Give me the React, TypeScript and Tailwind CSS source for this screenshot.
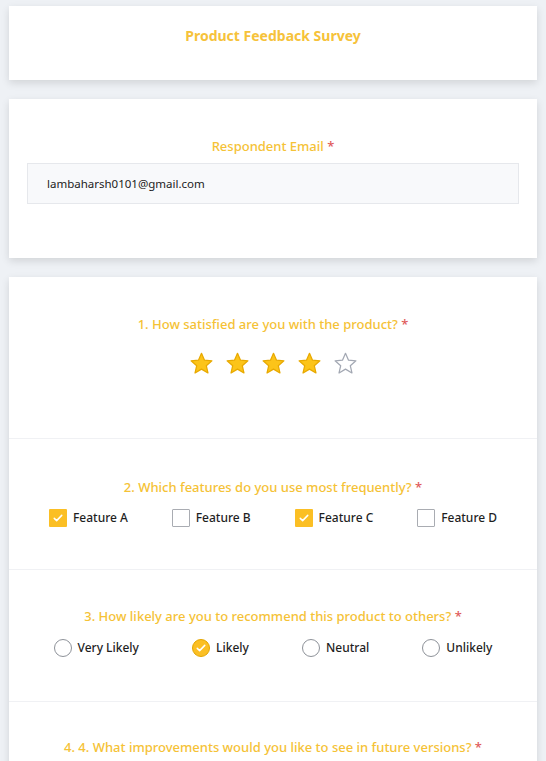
import React from 'react';

const FEATURES = [
  { label: 'Feature A', checked: true },
  { label: 'Feature B', checked: false },
  { label: 'Feature C', checked: true },
  { label: 'Feature D', checked: false },
];

const LIKELY = [
  { label: 'Very Likely', checked: false },
  { label: 'Likely', checked: true },
  { label: 'Neutral', checked: false },
  { label: 'Unlikely', checked: false },
];

function Star({ filled }: { filled: boolean }) {
  return (
    <svg viewBox="0 0 24 24" className="w-[25px] h-[25px]">
      <path
        d="M12 2.2l2.9 6.6 7.1.6-5.4 4.7 1.6 7-6.2-3.7-6.2 3.7 1.6-7L2 9.4l7.1-.6z"
        fill={filled ? '#fcc419' : 'none'}
        stroke={filled ? '#e8a900' : '#a3a8b3'}
        strokeWidth="1.2"
        strokeLinejoin="round"
      />
    </svg>
  );
}

function Check() {
  return (
    <svg viewBox="0 0 16 16" className="w-[12px] h-[12px]">
      <path d="M3 8.5l3.2 3L13 4.5" fill="none" stroke="#fff" strokeWidth="2" strokeLinecap="round" strokeLinejoin="round" />
    </svg>
  );
}

function Question({ text }: { text: string }) {
  return (
    <p className="text-center text-[13px] leading-5 font-medium text-[#f5c236]">
      {text} <span className="text-[#e05a5a]">*</span>
    </p>
  );
}

export default function App() {
  return (
    <div className="min-h-screen bg-[#eef1f5] px-[9px] pt-[6px] pb-6" style={{ fontFamily: '"Noto Sans", "Open Sans", sans-serif' }}>
      {/* Title card */}
      <div className="bg-white shadow-[0_3px_8px_rgba(0,0,0,0.12)] h-[74px] pt-[20px]">
        <h1 className="text-center text-[14px] leading-5 font-bold text-[#f6c23a]">Product Feedback Survey</h1>
      </div>

      {/* Email card */}
      <div className="mt-[19px] bg-white shadow-[0_3px_8px_rgba(0,0,0,0.12)] px-[18px] pt-[37px] pb-[54px]">
        <p className="text-center text-[13px] leading-5 font-medium text-[#f5c236]">
          Respondent Email <span className="text-[#e05a5a]">*</span>
        </p>
        <div className="mt-[7px] h-[41px] flex items-center px-[19px] bg-[#f8f9fb] border border-[#e6e8ec] text-[11.5px] text-[#222]">
          lambaharsh0101@gmail.com
        </div>
      </div>

      {/* Questions card */}
      <div className="mt-[19px] bg-white shadow-[0_3px_8px_rgba(0,0,0,0.12)]">
        <div className="px-[18px] pt-[37px] pb-[62px] border-b border-[#f0f1f4]">
          <Question text="1. How satisfied are you with the product?" />
          <div className="mt-[17px] flex justify-center gap-[11px]">
            {[true, true, true, true, false].map((f, i) => (
              <Star key={i} filled={f} />
            ))}
          </div>
        </div>

        <div className="px-[18px] pt-[38px] pb-[42px] border-b border-[#f0f1f4]">
          <Question text="2. Which features do you use most frequently?" />
          <div className="mt-[12px] flex justify-around">
            {FEATURES.map(f => (
              <div key={f.label} className="flex items-center gap-[6px] h-[18px]">
                {f.checked ? (
                  <span className="w-[18px] h-[18px] bg-[#fbbf24] flex items-center justify-center rounded-[1px]">
                    <Check />
                  </span>
                ) : (
                  <span className="w-[18px] h-[18px] border border-[#a9acb2] bg-white rounded-[1px]" />
                )}
                <span className="text-[12px] font-medium text-[#1f1f1f]">{f.label}</span>
              </div>
            ))}
          </div>
        </div>

        <div className="px-[18px] pt-[36px] pb-[44px] border-b border-[#f0f1f4]">
          <Question text="3. How likely are you to recommend this product to others?" />
          <div className="mt-[13px] flex justify-around">
            {LIKELY.map(o => (
              <div key={o.label} className="flex items-center gap-[6px] h-[18px]">
                {o.checked ? (
                  <span className="w-[18px] h-[18px] rounded-full bg-[#fbbf24] border border-[#e3a600] flex items-center justify-center">
                    <Check />
                  </span>
                ) : (
                  <span className="w-[18px] h-[18px] rounded-full border border-[#8e9299] bg-white" />
                )}
                <span className="text-[12px] font-medium text-[#1f1f1f]">{o.label}</span>
              </div>
            ))}
          </div>
        </div>

        <div className="px-[18px] pt-[35px] pb-[60px]">
          <Question text="4. 4. What improvements would you like to see in future versions?" />
        </div>
      </div>
    </div>
  );
}
